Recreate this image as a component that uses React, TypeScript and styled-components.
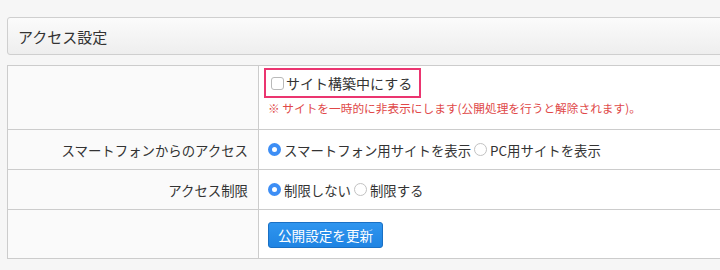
import React from "react";
import styled, { createGlobalStyle } from "styled-components";

const Global = createGlobalStyle`
  html, body { margin: 0; padding: 0; background: #f6f6f6; overflow: hidden; }
  body { font-family: "Noto Sans CJK JP", "Noto Sans", sans-serif; color: #333; }
`;

const Page = styled.div`
  width: 760px;
  padding: 17px 0 0 7px;
  display: flex;
  flex-direction: column;
  gap: 10px;
`;

const Heading = styled.div`
  height: 38px;
  box-sizing: border-box;
  border: 1px solid #cfcfcf;
  border-radius: 3px;
  background: linear-gradient(#fbfbfb, #eeeeee);
  display: flex;
  align-items: center;
  padding-left: 10px;
  font-size: 15px;
  color: #333;
`;

const Table = styled.table`
  border-collapse: collapse;
  width: 100%;
  border: 1px solid #cccccc;
  font-size: 13.4px;
`;

const Row = styled.tr<{ $h: number }>`
  height: ${(p) => p.$h}px;
  border-top: 1px solid #cccccc;
`;

const Label = styled.th`
  width: 240px;
  background: #fafafa;
  border-right: 1px solid #cccccc;
  text-align: right;
  font-weight: normal;
  padding: 0 10px 0 0;
  color: #333;
`;

const Cell = styled.td<{ $top?: boolean }>`
  background: #ffffff;
  padding: ${(p) => (p.$top ? "2px 0 0 9px" : "0 0 0 9px")};
  vertical-align: ${(p) => (p.$top ? "top" : "middle")};
`;

const Highlight = styled.label`
  display: inline-flex;
  align-items: center;
  gap: 2px;
  border: 2px solid #eb3570;
  padding: 0 7px 0 5px;
  height: 30px;
  box-sizing: border-box;
  margin-left: -4px;
  font-size: 14px;
`;

const Check = styled.span`
  width: 11px;
  height: 11px;
  border: 1px solid #b9b9b9;
  border-radius: 3px;
  background: #fff;
  display: inline-block;
  margin-top: 1px;
`;

const Note = styled.div`
  color: #e04848;
  font-size: 11.7px;
  line-height: 16px;
  margin-top: 2px;
  white-space: nowrap;
`;

const Options = styled.div`
  display: flex;
  align-items: center;
  gap: 3px;
  white-space: nowrap;
`;

const Option = styled.label`
  display: inline-flex;
  align-items: center;
  gap: 2px;
`;

const Radio = styled.span<{ $on?: boolean }>`
  width: 13px;
  height: 13px;
  border-radius: 50%;
  box-sizing: border-box;
  display: inline-block;
  margin-right: 1px;
  background: #fff;
  border: ${(p) => (p.$on ? "4px solid #3d8ef5" : "1px solid #c2c2c2")};
`;

const Button = styled.button`
  font-family: inherit;
  font-size: 13.6px;
  color: #fff;
  background: linear-gradient(#2f95ef, #1f84e3);
  border: 1px solid #1a70c4;
  border-radius: 3px;
  height: 26px;
  padding: 0 9px;
  margin-top: 1px;
`;

export default function App() {
  return (
    <>
      <Global />
      <Page>
        <Heading>アクセス設定</Heading>
        <Table>
          <tbody>
            <Row $h={64}>
              <Label></Label>
              <Cell $top>
                <Highlight>
                  <Check />
                  サイト構築中にする
                </Highlight>
                <Note>※ サイトを一時的に非表示にします(公開処理を行うと解除されます)。</Note>
              </Cell>
            </Row>
            <Row $h={40}>
              <Label>スマートフォンからのアクセス</Label>
              <Cell>
                <Options>
                  <Option>
                    <Radio $on />
                    スマートフォン用サイトを表示
                  </Option>
                  <Option>
                    <Radio />
                    PC用サイトを表示
                  </Option>
                </Options>
              </Cell>
            </Row>
            <Row $h={40}>
              <Label>アクセス制限</Label>
              <Cell>
                <Options>
                  <Option>
                    <Radio $on />
                    制限しない
                  </Option>
                  <Option>
                    <Radio />
                    制限する
                  </Option>
                </Options>
              </Cell>
            </Row>
            <Row $h={49}>
              <Label></Label>
              <Cell>
                <Button>公開設定を更新</Button>
              </Cell>
            </Row>
          </tbody>
        </Table>
      </Page>
    </>
  );
}
